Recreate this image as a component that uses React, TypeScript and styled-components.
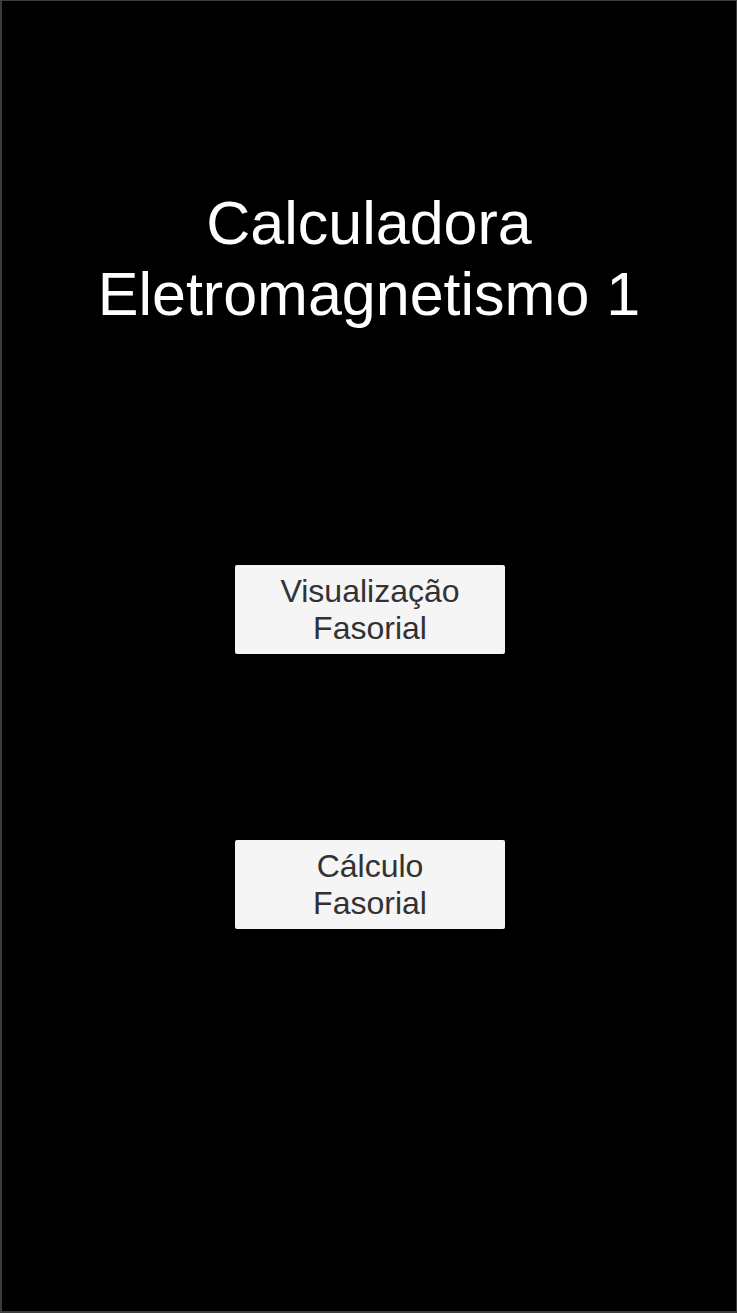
import React from 'react';
import styled, { createGlobalStyle } from 'styled-components';

const GlobalStyle = createGlobalStyle`
    html, body {
        margin: 0;
        padding: 0;
        background: #000;
    }
    * {
        box-sizing: border-box;
    }
`

const Screen = styled.div`
    width: 737px;
    height: 1313px;
    background: #000;
    border-style: solid;
    border-color: #3c3c3c;
    border-width: 1px 1px 2px 2px;
    display: flex;
    flex-direction: column;
    align-items: center;
    padding-top: 187px;
    font-family: "Liberation Sans", Arial, sans-serif;
`

const Title = styled.h1`
    margin: 0;
    color: #fff;
    font-weight: normal;
    font-size: 61px;
    line-height: 71px;
    text-align: center;
`

const Menu = styled.div`
    display: flex;
    flex-direction: column;
    align-items: center;
    gap: 186px;
    margin-top: 235px;
    margin-left: 2px;
`

const MenuButton = styled.button`
    width: 270px;
    height: 89px;
    background: #f5f5f5;
    border: none;
    border-radius: 2px;
    color: #323232;
    font-family: inherit;
    font-size: 32px;
    line-height: 37px;
    padding: 0;
    text-align: center;
    cursor: pointer;
`

const App: React.FC = () => {
    return (<>
        <GlobalStyle />
        <Screen>
            <Title>Calculadora<br />Eletromagnetismo 1</Title>
            <Menu>
                <MenuButton>Visualização<br />Fasorial</MenuButton>
                <MenuButton>Cálculo<br />Fasorial</MenuButton>
            </Menu>
        </Screen>
    </>);
}

export default App;
